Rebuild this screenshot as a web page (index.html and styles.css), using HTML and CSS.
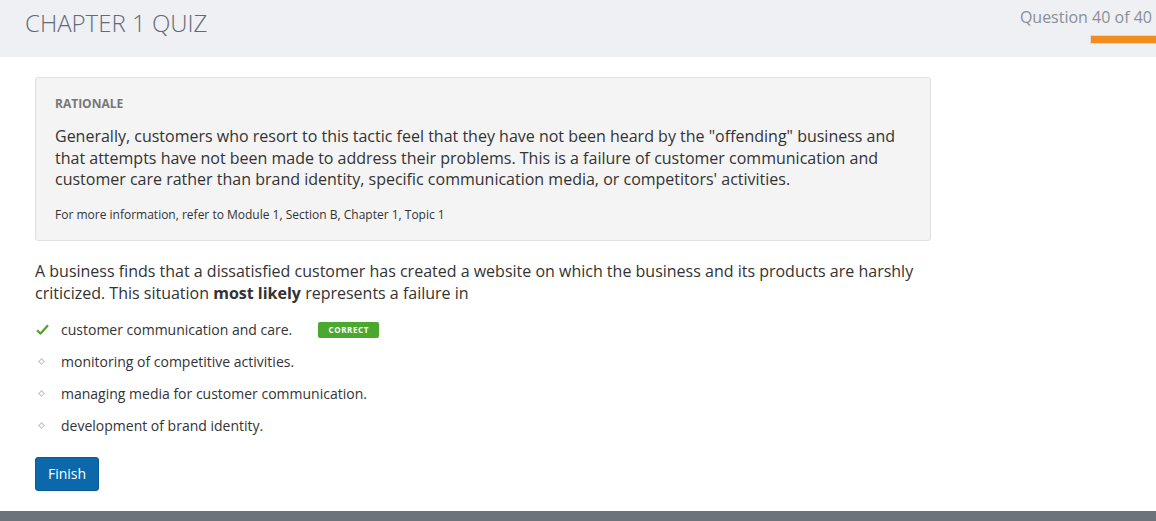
FILE: index.html
```html
<!DOCTYPE html>
<html>
<head>
<meta charset="utf-8">
<link rel="stylesheet" href="styles.css">
</head>
<body>
<header class="topbar">
  <h1 class="title">CHAPTER 1 QUIZ</h1>
  <div class="progress">
    <div class="progress-label">Question 40 of 40</div>
    <div class="progress-track"><div class="progress-fill" style="width:100%"></div></div>
  </div>
</header>
<main class="content">
  <section class="rationale">
    <h2 class="rationale-head">RATIONALE</h2>
    <p class="rationale-text">Generally, customers who resort to this tactic feel that they have not been heard by the "offending" business and that attempts have not been made to address their problems. This is a failure of customer communication and customer care rather than brand identity, specific communication media, or competitors' activities.</p>
    <p class="rationale-ref">For more information, refer to Module 1, Section B, Chapter 1, Topic 1</p>
  </section>
  <p class="question">A business finds that a dissatisfied customer has created a website on which the business and its products are harshly criticized. This situation <strong>most likely</strong> represents a failure in</p>
  <ul class="options">
    <li class="option">
      <span class="mark"><svg width="13" height="11" viewBox="0 0 13 11"><path d="M1 6.2 L4.6 9.6 L12 1.2" fill="none" stroke="#5a9e2f" stroke-width="2.2" stroke-linejoin="round"/></svg></span>
      <span class="opt-text">customer communication and care.</span>
      <span class="badge">CORRECT</span>
    </li>
    <li class="option">
      <span class="mark"><span class="diamond"></span></span>
      <span class="opt-text">monitoring of competitive activities.</span>
    </li>
    <li class="option">
      <span class="mark"><span class="diamond"></span></span>
      <span class="opt-text">managing media for customer communication.</span>
    </li>
    <li class="option">
      <span class="mark"><span class="diamond"></span></span>
      <span class="opt-text">development of brand identity.</span>
    </li>
  </ul>
  <button class="finish">Finish</button>
</main>
<footer class="footbar"></footer>
</body>
</html>
```

FILE: styles.css
```css
* { box-sizing: border-box; }
html, body { margin: 0; padding: 0; }
body {
  font-family: "Open Sans", "Liberation Sans", sans-serif;
  color: #333;
  background: #fff;
  width: 1156px;
  height: 521px;
  display: flex;
  flex-direction: column;
  overflow: hidden;
}
.topbar {
  height: 57px;
  background: #eff0f4;
  display: flex;
  justify-content: space-between;
  align-items: flex-start;
  padding-left: 25px;
  flex-shrink: 0;
}
.title {
  margin: 6px 0 0 0;
  font-weight: 300;
  font-size: 24px;
  line-height: 34px;
  color: #5f6b78;
  letter-spacing: 0;
}
.progress {
  display: flex;
  flex-direction: column;
  align-items: flex-end;
  padding-top: 6px;
}
.progress-label {
  font-size: 16px;
  line-height: 22px;
  color: #8a8f96;
  padding-right: 4px;
}
.progress-track {
  margin-top: 7px;
  width: 66px;
  height: 9px;
  background: #d9dbe0;
  padding: 1px 0 1px 1px;
}
.progress-fill {
  height: 100%;
  background: #f28c1c;
}
.content {
  flex: 1;
  padding: 20px 0 0 35px;
}
.rationale {
  width: 896px;
  background: #f4f4f4;
  border: 1px solid #dfdfdf;
  border-radius: 3px;
  padding: 18px 19px 17px 19px;
}
.rationale-head {
  margin: 0;
  font-size: 12px;
  font-weight: 700;
  line-height: 16px;
  color: #777;
}
.rationale-text {
  margin: 14px 0 0 0;
  font-size: 16px;
  line-height: 21.5px;
  color: #333;
}
.rationale-ref {
  margin: 16px 0 0 0;
  font-size: 12px;
  line-height: 16px;
  color: #333;
}
.question {
  margin: 19px 0 0 0;
  width: 896px;
  font-size: 16px;
  line-height: 22px;
  color: #333;
}
.options {
  list-style: none;
  margin: 10px 0 0 0;
  padding: 0;
}
.option {
  display: flex;
  align-items: center;
  height: 32px;
  font-size: 14px;
  color: #333;
}
.mark {
  width: 26px;
  display: flex;
  align-items: center;
  padding-left: 1px;
}
.diamond {
  width: 5px;
  height: 5px;
  border: 1px solid #c4c4c4;
  transform: rotate(45deg);
  margin-left: 3px;
}
.badge {
  margin-left: 26px;
  background: #4aa82e;
  color: #fff;
  font-size: 8px;
  font-weight: 700;
  letter-spacing: 0.6px;
  line-height: 16px;
  height: 16px;
  width: 61px;
  text-align: center;
  border-radius: 2px;
}
.finish {
  margin-top: 15px;
  background: #0a68ab;
  color: #fff;
  border: 1px solid #0a5a94;
  border-radius: 3px;
  font-family: "Open Sans", "Liberation Sans", sans-serif;
  font-size: 14px;
  height: 34px;
  width: 64px;
  padding: 0;
}
.footbar {
  height: 10px;
  background: #6b747b;
  flex-shrink: 0;
}
```
